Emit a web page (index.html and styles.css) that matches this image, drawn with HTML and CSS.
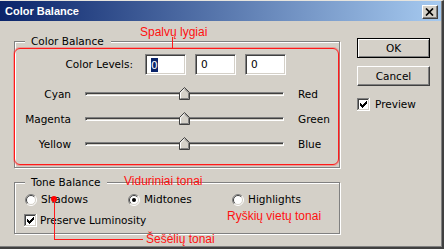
FILE: index.html
```html
<!DOCTYPE html>
<html>
<head>
<meta charset="utf-8">
<link rel="stylesheet" href="styles.css">
</head>
<body>
<div class="window">
  <div class="titlebar">
    <span class="title">Color Balance</span>
    <span class="close"><svg width="10" height="8" viewBox="0 0 10 8"><path d="M1 0.5L8 7.5M8 0.5L1 7.5" stroke="#000" stroke-width="1.7" fill="none"/></svg></span>
  </div>
  <div class="client">
    <div class="left">
      <div class="group group-balance">
        <span class="legend">Color Balance</span>
        <div class="levels">
          <span class="levels-label">Color Levels:</span>
          <span class="num"><span class="sel">0</span></span>
          <span class="num">0</span>
          <span class="num">0</span>
        </div>
        <div class="sliders">
          <span class="sl-name">Cyan</span>
          <span class="track"><svg class="thumb" width="11" height="13" viewBox="0 0 11 13"><polygon points="0.5,5.5 5.5,0.5 10.5,5.5 10.5,12.5 0.5,12.5" fill="#d4d0c8" stroke="#404040"/><polyline points="1.5,11.5 1.5,5.9 5.5,1.9" fill="none" stroke="#fff"/><polyline points="5.5,1.9 9.5,5.9 9.5,11.5 1.5,11.5" fill="none" stroke="#808080"/></svg></span>
          <span>Red</span>
          <span class="sl-name">Magenta</span>
          <span class="track"><svg class="thumb" width="11" height="13" viewBox="0 0 11 13"><polygon points="0.5,5.5 5.5,0.5 10.5,5.5 10.5,12.5 0.5,12.5" fill="#d4d0c8" stroke="#404040"/><polyline points="1.5,11.5 1.5,5.9 5.5,1.9" fill="none" stroke="#fff"/><polyline points="5.5,1.9 9.5,5.9 9.5,11.5 1.5,11.5" fill="none" stroke="#808080"/></svg></span>
          <span>Green</span>
          <span class="sl-name">Yellow</span>
          <span class="track"><svg class="thumb" width="11" height="13" viewBox="0 0 11 13"><polygon points="0.5,5.5 5.5,0.5 10.5,5.5 10.5,12.5 0.5,12.5" fill="#d4d0c8" stroke="#404040"/><polyline points="1.5,11.5 1.5,5.9 5.5,1.9" fill="none" stroke="#fff"/><polyline points="5.5,1.9 9.5,5.9 9.5,11.5 1.5,11.5" fill="none" stroke="#808080"/></svg></span>
          <span>Blue</span>
        </div>
        <div class="highlight-box"></div>
      </div>
      <div class="group group-tone">
        <span class="legend">Tone Balance</span>
        <div class="radios">
          <span class="opt"><svg width="12" height="12" viewBox="0 0 12 12"><circle cx="6" cy="6" r="5" fill="#fff"/><path d="M2.1 9.9A5.5 5.5 0 0 1 9.9 2.1" stroke="#808080" fill="none"/><path d="M9.9 2.1A5.5 5.5 0 0 1 2.1 9.9" stroke="#fff" fill="none"/><path d="M2.8 9.2A4.5 4.5 0 0 1 9.2 2.8" stroke="#404040" fill="none"/><path d="M9.2 2.8A4.5 4.5 0 0 1 2.8 9.2" stroke="#d4d0c8" fill="none"/></svg>Shadows</span>
          <span class="opt"><svg width="12" height="12" viewBox="0 0 12 12"><circle cx="6" cy="6" r="5" fill="#fff"/><path d="M2.1 9.9A5.5 5.5 0 0 1 9.9 2.1" stroke="#808080" fill="none"/><path d="M9.9 2.1A5.5 5.5 0 0 1 2.1 9.9" stroke="#fff" fill="none"/><path d="M2.8 9.2A4.5 4.5 0 0 1 9.2 2.8" stroke="#404040" fill="none"/><path d="M9.2 2.8A4.5 4.5 0 0 1 2.8 9.2" stroke="#d4d0c8" fill="none"/><circle cx="6" cy="6" r="2" fill="#000"/></svg>Midtones</span>
          <span class="opt"><svg width="12" height="12" viewBox="0 0 12 12"><circle cx="6" cy="6" r="5" fill="#fff"/><path d="M2.1 9.9A5.5 5.5 0 0 1 9.9 2.1" stroke="#808080" fill="none"/><path d="M9.9 2.1A5.5 5.5 0 0 1 2.1 9.9" stroke="#fff" fill="none"/><path d="M2.8 9.2A4.5 4.5 0 0 1 9.2 2.8" stroke="#404040" fill="none"/><path d="M9.2 2.8A4.5 4.5 0 0 1 2.8 9.2" stroke="#d4d0c8" fill="none"/></svg>Highlights</span>
        </div>
        <span class="opt lum"><svg width="13" height="13" viewBox="0 0 13 13"><rect width="13" height="13" fill="#fff"/><rect width="12" height="1" fill="#808080"/><rect width="1" height="12" fill="#808080"/><rect x="1" y="1" width="10" height="1" fill="#404040"/><rect x="1" y="1" width="1" height="10" fill="#404040"/><rect x="1" y="11" width="11" height="1" fill="#d4d0c8"/><rect x="11" y="1" width="1" height="11" fill="#d4d0c8"/><path d="M3 5h1v3H3zM4 6h1v3H4zM5 7h1v3H5zM6 6h1v3H6zM7 5h1v3H7zM8 4h1v3H8zM9 3h1v3H9z" fill="#000"/></svg>Preserve Luminosity</span>
      </div>
    </div>
    <div class="right">
      <button class="btn btn-default">OK</button>
      <button class="btn">Cancel</button>
      <span class="opt preview"><svg width="13" height="13" viewBox="0 0 13 13"><rect width="13" height="13" fill="#fff"/><rect width="12" height="1" fill="#808080"/><rect width="1" height="12" fill="#808080"/><rect x="1" y="1" width="10" height="1" fill="#404040"/><rect x="1" y="1" width="1" height="10" fill="#404040"/><rect x="1" y="11" width="11" height="1" fill="#d4d0c8"/><rect x="11" y="1" width="1" height="11" fill="#d4d0c8"/><path d="M3 5h1v3H3zM4 6h1v3H4zM5 7h1v3H5zM6 6h1v3H6zM7 5h1v3H7zM8 4h1v3H8zM9 3h1v3H9z" fill="#000"/></svg>Preview</span>
    </div>
  </div>

  <span class="note note-levels">Spalvų lygiai</span>
  <span class="rline rline-levels"></span>
  <span class="note note-mid">Viduriniai tonai</span>
  <span class="note note-high">Ryškių vietų tonai</span>
  <span class="note note-shadow">Šešėlių tonai</span>
  <span class="rdot"></span>
  <span class="rline rline-shadow-v"></span>
  <span class="rline rline-shadow-h"></span>
</div>
</body>
</html>
```

FILE: styles.css
```css
body {
  margin: 0;
  background: #d4d0c8;
  font-family: "DejaVu Sans", sans-serif;
  font-size: 10.5px;
  line-height: 13px;
  color: #000;
}

.window {
  position: relative;
  width: 444px;
  height: 249px;
  box-sizing: border-box;
  background: #d4d0c8;
  border-top: 1px solid #e6e4de;
  border-right: 2px solid #404040;
  border-bottom: 2px solid #404040;
  box-shadow: inset -1px -1px 0 #808080;
  display: flex;
  flex-direction: column;
}

.titlebar {
  height: 20px;
  margin-right: 1px;
  padding: 0 3px 0 5px;
  background: linear-gradient(to right, #0a246a, #a6caf0);
  display: flex;
  align-items: center;
  justify-content: space-between;
}

.title {
  color: #fff;
  font: bold 11px "Liberation Sans", sans-serif;
}

.close {
  width: 16px;
  height: 14px;
  margin-top: 1px;
  box-sizing: border-box;
  background: #d4d0c8;
  border: 1px solid;
  border-color: #fff #404040 #404040 #fff;
  box-shadow: inset -1px -1px 0 #808080;
  display: flex;
  align-items: center;
  justify-content: center;
}

.client {
  flex: 1;
  display: flex;
  padding: 17px 0 0 14px;
}

.left {
  width: 326px;
  padding-top: 3px;
}

.right {
  margin-left: 17px;
  display: flex;
  flex-direction: column;
  align-items: flex-start;
}

.group {
  position: relative;
  box-sizing: border-box;
  border: 1px solid #808080;
  box-shadow: 1px 1px 0 #fff, inset 1px 1px 0 #fff;
}

.group-balance {
  height: 127px;
}

.group-tone {
  height: 52px;
  margin-top: 14px;
}

.legend {
  position: absolute;
  top: -7px;
  left: 10px;
  padding: 0 7px 0 6px;
  background: #d4d0c8;
  line-height: 13px;
}

.levels {
  display: flex;
  align-items: center;
  height: 21px;
  margin-top: 12px;
}

.levels-label {
  width: 118px;
  margin-right: 12px;
  text-align: right;
}

.num {
  width: 41px;
  height: 21px;
  box-sizing: border-box;
  border: 1px solid;
  border-color: #808080 #fff #fff #808080;
  box-shadow: inset 1px 1px 0 #404040, inset -1px -1px 0 #d4d0c8;
  background: #fff;
  padding-left: 5px;
  display: flex;
  align-items: center;
}

.num + .num {
  margin-left: 9px;
}

.sel {
  background: #0a246a;
  color: #fff;
  line-height: 14px;
}

.sliders {
  display: grid;
  grid-template-columns: 56px 199px auto;
  grid-auto-rows: 24px;
  row-gap: 1px;
  column-gap: 14px;
  align-items: center;
  margin-top: 7px;
}

.sl-name {
  text-align: right;
}

.track {
  position: relative;
  height: 4px;
  box-sizing: border-box;
  border: 1px solid;
  border-color: #808080 #fff #fff #808080;
  box-shadow: inset 1px 1px 0 #404040;
}

.thumb {
  position: absolute;
  top: -6px;
  left: calc(50% - 5.5px);
}

.highlight-box {
  position: absolute;
  top: 6px;
  left: -1px;
  right: 0;
  bottom: 2px;
  border: 1px solid #ff1a1a;
  border-radius: 6px;
  box-shadow: 0 0 0 1px rgba(255, 90, 90, 0.45);
}

.radios {
  display: grid;
  grid-template-columns: 103px 104px auto;
  align-items: center;
  height: 13px;
  margin: 10px 0 0 10px;
}

.opt {
  display: flex;
  align-items: center;
  gap: 4px;
}

.lum {
  margin: 8px 0 0 9px;
  gap: 3px;
}

.btn {
  width: 73px;
  height: 20px;
  padding: 0;
  box-sizing: border-box;
  font: inherit;
  color: #000;
  background: #d4d0c8;
  border: 1px solid;
  border-color: #fff #404040 #404040 #fff;
  box-shadow: inset -1px -1px 0 #808080;
}

.btn-default {
  border-color: #000;
  box-shadow: inset 1px 1px 0 #fff, inset -1px -1px 0 #808080;
}

.btn + .btn {
  margin-top: 8px;
}

.preview {
  margin-top: 12px;
  gap: 5px;
}

.note {
  position: absolute;
  font: 12px/14px "Liberation Sans", sans-serif;
  color: #ff1010;
  white-space: nowrap;
}

.note-levels { left: 140px; top: 24px; }
.note-mid { left: 124px; top: 173px; }
.note-high { left: 227px; top: 208px; }
.note-shadow { left: 146px; top: 231px; }

.rline {
  position: absolute;
  background: #ff1a1a;
}

.rline-levels { left: 172px; top: 36px; width: 1px; height: 11px; }
.rline-shadow-v { left: 54px; top: 198px; width: 1px; height: 41px; }
.rline-shadow-h { left: 54px; top: 238px; width: 89px; height: 1px; }

.rdot {
  position: absolute;
  left: 51px;
  top: 195px;
  width: 6px;
  height: 6px;
  border-radius: 50%;
  background: #ff0000;
}
```
